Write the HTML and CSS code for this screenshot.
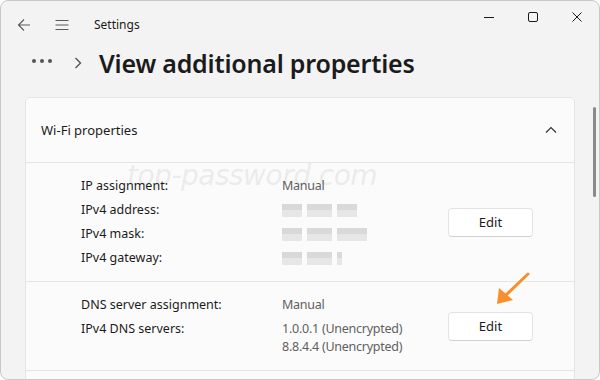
FILE: index.html
```html
<!DOCTYPE html>
<html lang="en">
<head>
  <meta charset="UTF-8">
  <title>Settings</title>
  <link rel="stylesheet" href="styles.css">
</head>
<body>
  <div class="window">
    <div class="titlebar">
      <button class="nav-btn" title="Back">
        <svg width="14" height="14" viewBox="0 0 14 14"><path d="M13 7H1.5M7 1.5L1.5 7L7 12.5" fill="none" stroke="#5a5a5a" stroke-width="1.1"/></svg>
      </button>
      <button class="nav-btn" title="Menu">
        <svg width="14" height="12" viewBox="0 0 14 12"><path d="M0.5 1.5H13.5M0.5 6H13.5M0.5 10.5H13.5" fill="none" stroke="#5a5a5a" stroke-width="1.1"/></svg>
      </button>
      <span class="app-name">Settings</span>
      <div class="controls">
        <span class="ctl"><svg width="10" height="10" viewBox="0 0 10 10"><path d="M0 5.5H10" stroke="#1a1a1a" stroke-width="1"/></svg></span>
        <span class="ctl"><svg width="10" height="10" viewBox="0 0 10 10"><rect x="0.5" y="0.5" width="9" height="9" rx="1.5" fill="none" stroke="#1a1a1a" stroke-width="1"/></svg></span>
        <span class="ctl"><svg width="10" height="10" viewBox="0 0 10 10"><path d="M0.5 0.5L9.5 9.5M9.5 0.5L0.5 9.5" stroke="#1a1a1a" stroke-width="1"/></svg></span>
      </div>
    </div>

    <div class="crumb">
      <span class="dots"><i></i><i></i><i></i></span>
      <svg class="crumb-sep" width="8" height="12" viewBox="0 0 8 12"><path d="M1.5 1L6.5 6L1.5 11" fill="none" stroke="#555" stroke-width="1.4"/></svg>
      <h1>View additional properties</h1>
    </div>

    <div class="card">
      <div class="card-head">
        <span>Wi-Fi properties</span>
        <svg width="12" height="8" viewBox="0 0 12 8"><path d="M1 6.5L6 1.5L11 6.5" fill="none" stroke="#333" stroke-width="1.2"/></svg>
      </div>

      <div class="section">
        <div class="props">
          <span>IP assignment:</span><span class="val">Manual</span>
          <span>IPv4 address:</span><span class="val"><i class="blur w75"></i></span>
          <span>IPv4 mask:</span><span class="val"><i class="blur w85"></i></span>
          <span>IPv4 gateway:</span><span class="val"><i class="blur w60"></i></span>
        </div>
        <button class="edit">Edit</button>
      </div>

      <div class="section">
        <div class="props">
          <span>DNS server assignment:</span><span class="val">Manual</span>
          <span>IPv4 DNS servers:</span><span class="val">1.0.0.1 (Unencrypted)<br>8.8.4.4 (Unencrypted)</span>
        </div>
        <button class="edit">Edit</button>
      </div>

      <div class="section empty"></div>
    </div>

    <div class="watermark">top-password.com</div>
    <div class="scroll-thumb"></div>
    <svg class="arrow" width="40" height="40" viewBox="490 268 40 40">
      <path d="M528 274L506 295" stroke="#f7902c" stroke-width="3" stroke-linecap="round"/>
      <path d="M497 304L499 288L513 300Z" fill="#f7902c"/>
    </svg>
  </div>
</body>
</html>
```

FILE: styles.css
```css
body {
  margin: 0;
  background-color: #fff;
  font-family: "Noto Sans", "Open Sans", Arial, sans-serif;
  color: #1b1b1b;
}
.window {
  position: relative;
  box-sizing: border-box;
  width: 600px;
  height: 380px;
  background-color: #f3f3f3;
  border: 1px solid #c8c8c8;
  border-radius: 8px;
  overflow: hidden;
}
.titlebar {
  display: flex;
  align-items: center;
  height: 47px;
  padding-left: 8px;
}
.nav-btn {
  width: 30px;
  height: 30px;
  margin-right: 8px;
  border: none;
  background: none;
  padding: 0;
  display: flex;
  align-items: center;
  justify-content: center;
}
.app-name {
  margin-left: 9px;
  font-size: 12px;
}
.controls {
  display: flex;
  align-self: flex-start;
  margin-left: auto;
  height: 31px;
}
.ctl {
  width: 44px;
  display: flex;
  align-items: center;
  justify-content: center;
}
.crumb {
  display: flex;
  align-items: center;
  height: 29px;
  padding-left: 31px;
  padding-bottom: 20px;
}
.dots {
  display: flex;
  gap: 4px;
  margin-top: -4px;
}
.dots i {
  width: 4px;
  height: 4px;
  border-radius: 50%;
  background-color: #555;
}
.crumb-sep {
  margin: 0 17px 0 22px;
}
h1 {
  margin: 0;
  font-size: 25px;
  font-weight: 600;
  letter-spacing: -0.2px;
}
.card {
  box-sizing: border-box;
  margin-left: 24px;
  width: 550px;
  background-color: #fbfbfb;
  border: 1px solid #e5e5e5;
  border-radius: 4px;
}
.card-head {
  display: flex;
  align-items: center;
  justify-content: space-between;
  height: 64px;
  padding: 0 17px 0 15px;
  font-size: 13px;
}
.section {
  display: flex;
  align-items: center;
  border-top: 1px solid #e5e5e5;
  padding: 14px 41px 14px 55px;
  font-size: 12.5px;
}
.section.empty {
  height: 40px;
}
.props {
  display: grid;
  grid-template-columns: 201px auto;
  row-gap: 6px;
  line-height: 18px;
  flex: 1;
}
.val {
  color: #5f5f5f;
  letter-spacing: -0.25px;
}
.blur {
  display: inline-block;
  height: 13px;
  vertical-align: middle;
  background:
    linear-gradient(90deg, transparent 0 20px, #fbfbfb 20px 25px, transparent 25px 50px, #fbfbfb 50px 55px, transparent 55px),
    linear-gradient(180deg, #d9d9d9 0 6px, #e6e6e6 6px);
}
.w75 { width: 75px; }
.w85 { width: 85px; }
.w60 { width: 60px; }
.edit {
  width: 85px;
  height: 29px;
  background-color: #fff;
  border: 1px solid #e3e3e3;
  border-bottom-color: #d0d0d0;
  border-radius: 4px;
  font-family: inherit;
  font-size: 13px;
  color: #1b1b1b;
}
.watermark {
  position: absolute;
  left: 126px;
  top: 158px;
  font-family: "DejaVu Sans", sans-serif;
  font-size: 28px;
  font-style: italic;
  color: #000;
  opacity: 0.06;
  letter-spacing: -0.5px;
}
.scroll-thumb {
  position: absolute;
  left: 592px;
  top: 106px;
  width: 3px;
  height: 90px;
  border-radius: 2px;
  background-color: #8a8a8a;
}
.arrow {
  position: absolute;
  left: 489px;
  top: 267px;
}
```
